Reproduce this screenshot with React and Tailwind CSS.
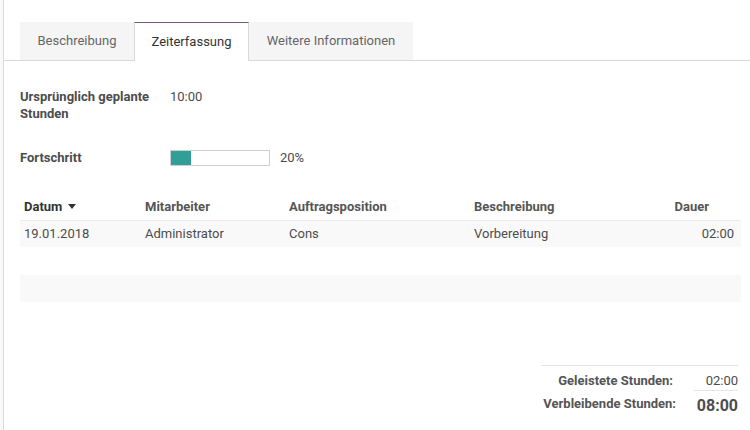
export default function App() {
  const rows = [
    { date: "19.01.2018", user: "Administrator", pos: "Cons", desc: "Vorbereitung", dur: "02:00" },
  ];

  return (
    <div
      className="w-[750px] h-[430px] bg-[#f9f9f9] pl-[3px] text-[13px] text-[#4c4c4c] overflow-hidden"
      style={{ fontFamily: "Roboto, 'Liberation Sans', sans-serif" }}
    >
      <div className="h-full bg-white border-l border-[#d9d9d9] flex flex-col">
        {/* Tabs */}
        <div className="mt-[22px] flex pl-4 border-b border-[#d9d9d9] h-[39px]">
          <div className="w-[114px] h-[38px] bg-[#f5f5f5] flex items-center justify-center text-[#666]">
            Beschreibung
          </div>
          <div className="w-[115px] h-[39px] bg-white border-t border-t-[#7c5a7b] border-x border-[#d9d9d9] flex items-center justify-center text-[#333] -mb-px pb-px">
            Zeiterfassung
          </div>
          <div className="w-[164px] h-[38px] bg-[#f5f5f5] flex items-center justify-center text-[#666]">
            Weitere Informationen
          </div>
        </div>

        {/* Fields */}
        <div className="pl-4 pr-[9px] flex flex-col">
          <div className="mt-[27px] flex leading-[17px]">
            <div className="w-[150px] font-bold">
              Ursprünglich geplante
              <br />
              Stunden
            </div>
            <div>10:00</div>
          </div>

          <div className="mt-[27px] flex items-center h-[17px]">
            <div className="w-[150px] font-bold">Fortschritt</div>
            <div className="w-[100px] h-[16px] border border-[#cfcfcf] bg-white">
              <div className="w-[20px] h-full bg-[#2f9f98]" />
            </div>
            <div className="ml-[10px]">20%</div>
          </div>

          {/* Table */}
          <table className="mt-[27px] w-full border-collapse">
            <thead>
              <tr className="h-[27px] border-b border-[#ececec]">
                <th className="w-[121px] pl-1 text-left font-bold text-[#333]">
                  <span className="inline-flex items-center gap-[6px]">
                    Datum
                    <svg width="8" height="5" viewBox="0 0 8 5">
                      <path d="M0 0h8L4 5z" fill="#333" />
                    </svg>
                  </span>
                </th>
                <th className="w-[144px] pl-1 text-left font-bold text-[#555]">Mitarbeiter</th>
                <th className="w-[185px] pl-1 text-left font-bold text-[#555]">Auftragsposition</th>
                <th className="pl-1 text-left font-bold text-[#555]">Beschreibung</th>
                <th className="pr-[32px] text-right font-bold text-[#555]">Dauer</th>
              </tr>
            </thead>
            <tbody>
              {rows.map((r) => (
                <tr key={r.date} className="h-[27px] bg-[#f9f9f9]">
                  <td className="pl-1">{r.date}</td>
                  <td className="pl-1">{r.user}</td>
                  <td className="pl-1">{r.pos}</td>
                  <td className="pl-1">{r.desc}</td>
                  <td className="pr-[7px] text-right">{r.dur}</td>
                </tr>
              ))}
              <tr className="h-[28px]">
                <td colSpan={5}></td>
              </tr>
              <tr className="h-[27px] bg-[#f9f9f9]">
                <td colSpan={5}></td>
              </tr>
            </tbody>
          </table>

          {/* Totals */}
          <div className="mt-[63px] self-end mr-[3px] w-[197px] border-t border-[#e5e5e5] pt-[5px]">
            <div className="flex justify-end items-center h-[19px]">
              <div className="font-bold text-[#555] text-right">Geleistete Stunden:</div>
              <div className="w-[65px] text-right">02:00</div>
            </div>
            <div className="flex justify-end items-center h-[27px]">
              <div className="font-bold text-[#555] text-right">Verbleibende Stunden:</div>
              <div className="ml-[18px] w-[44px] border-t border-[#e5e5e5] text-right text-[16px] font-bold text-[#4c4c4c] pt-[3px]">
                08:00
              </div>
            </div>
          </div>
        </div>
      </div>
    </div>
  );
}
